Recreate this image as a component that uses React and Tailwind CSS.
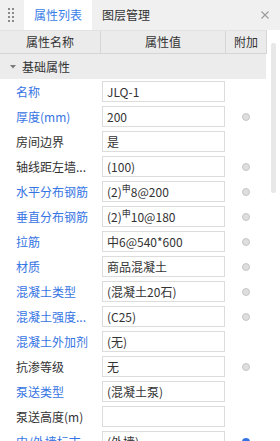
import React from 'react';

const BLUE = 'text-[#3574e3]';

const rows = [
    { label: '名称', value: 'JLQ-1', blue: true, dot: false },
    { label: '厚度(mm)', value: '200', blue: true, dot: true },
    { label: '房间边界', value: '是', blue: false, dot: false },
    { label: '轴线距左墙...', value: '(100)', blue: false, dot: true },
    { label: '水平分布钢筋', value: ['(2)', '8@200'], blue: true, dot: true },
    { label: '垂直分布钢筋', value: ['(2)', '10@180'], blue: true, dot: true },
    { label: '拉筋', value: '中6@540*600', blue: true, dot: true },
    { label: '材质', value: '商品混凝土', blue: true, dot: true },
    { label: '混凝土类型', value: '(混凝土20石)', blue: true, dot: true },
    { label: '混凝土强度...', value: '(C25)', blue: true, dot: true },
    { label: '混凝土外加剂', value: '(无)', blue: true, dot: false },
    { label: '抗渗等级', value: '无', blue: false, dot: true },
    { label: '泵送类型', value: '(混凝土泵)', blue: true, dot: false },
    { label: '泵送高度(m)', value: '', blue: false, dot: false },
    { label: '内/外墙标志', value: '(外墙)', blue: true, dot: 'blue' },
];

const Value = ({ value }) => {
    if (Array.isArray(value)) {
        return (
            <span>
                {value[0]}
                <span className="align-super text-[9px] leading-none">申</span>
                {value[1]}
            </span>
        );
    }
    return <span>{value}</span>;
};

const Row = ({ row }) => (
    <div className="flex h-[25px] shrink-0 items-center">
        <div className={`w-[102px] truncate pl-[16px] ${row.blue ? BLUE : 'text-[#333]'}`}>{row.label}</div>
        <div className="flex h-[21px] w-[123px] items-center border border-[#dcdcdc] bg-white px-[4px] text-[#333]">
            <Value value={row.value} />
        </div>
        <div className="flex w-[41px] justify-center">
            {row.dot === 'blue' && <span className="h-[8px] w-[8px] rounded-full bg-[#3574e3]" />}
            {row.dot === true && <span className="h-[8px] w-[8px] rounded-full border border-[#c6c6c6] bg-[#dedede]" />}
        </div>
    </div>
);

export default function App() {
    return (
        <div
            className="flex h-[441px] w-[280px] flex-col overflow-hidden bg-white text-[12px] leading-[16px]"
            style={{ fontFamily: '"Noto Sans CJK SC", "Noto Sans", sans-serif' }}
        >
            {/* tab bar */}
            <div className="flex h-[30px] shrink-0 items-stretch bg-[#f0f0f0]">
                <div className="flex w-[24px] items-center pl-[8px]">
                    <div className="grid grid-cols-2 gap-[2px]">
                        {Array.from({ length: 8 }).map((_, i) => (
                            <span key={i} className="h-[2px] w-[2px] bg-[#8a8a8a]" />
                        ))}
                    </div>
                </div>
                <div className="flex w-[68px] items-center justify-center bg-white text-[#3a7ee8]">属性列表</div>
                <div className="flex items-center px-[10px] text-[#333]">图层管理</div>
                <div className="flex-1" />
                <div className="flex items-center pr-[11px]">
                    <svg width="8" height="8" viewBox="0 0 8 8">
                        <path d="M0.5 0.5 L7.5 7.5 M7.5 0.5 L0.5 7.5" stroke="#9a9a9a" strokeWidth="1.1" />
                    </svg>
                </div>
            </div>

            <div className="flex min-h-0 flex-1">
                <div className="flex w-[267px] flex-col">
                    {/* header */}
                    <div className="flex h-[24px] shrink-0 border-b border-r border-t border-[#d6d6d6] border-t-[#e2e2e2] bg-[#ebebeb] text-[#333]">
                        <div className="flex w-[101px] items-center justify-center border-r border-[#d6d6d6]">属性名称</div>
                        <div className="flex w-[125px] items-center justify-center border-r border-[#d6d6d6]">属性值</div>
                        <div className="flex flex-1 items-center justify-center">附加</div>
                    </div>
                    {/* section */}
                    <div className="flex h-[25px] w-[266px] shrink-0 items-center bg-[#ececec] pl-[10px] text-[#333]">
                        <svg width="6" height="4" viewBox="0 0 6 4" className="mr-[6px]">
                            <path d="M0 0 L6 0 L3 3.5 Z" fill="#7a7a7a" />
                        </svg>
                        基础属性
                    </div>
                    {rows.map((row, idx) => (
                        <Row key={idx} row={row} />
                    ))}
                </div>
                {/* scrollbar */}
                <div className="pl-[4px] pt-[13px]">
                    <div className="h-[150px] w-[5px] rounded-[2px] bg-[#e8e8e8]" />
                </div>
            </div>
        </div>
    );
}
